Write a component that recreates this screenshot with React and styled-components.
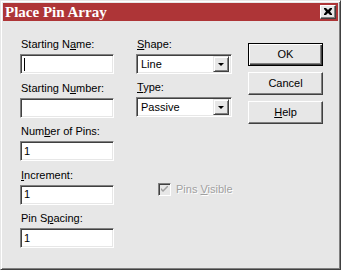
import React from "react";
import styled, { createGlobalStyle } from "styled-components";

// Classic Win9x dialog look
const GlobalStyle = createGlobalStyle`
  html, body {
    margin: 0;
    padding: 0;
    background: #e7e7e7;
  }
  body {
    font-family: "Liberation Sans", Arial, sans-serif;
    font-size: 11px;
    color: #000;
  }
`;

const Window = styled.div`
  width: 341px;
  height: 270px;
  box-sizing: border-box;
  background: #e7e7e7;
  border: 1px solid;
  border-color: #e7e7e7 #404040 #404040 #e7e7e7;
  box-shadow: inset 1px 1px #fff, inset -1px -1px #808080;
  padding: 2px;
  display: flex;
  flex-direction: column;
`;

const TitleBar = styled.div`
  height: 18px;
  background: #ae3537;
  display: flex;
  align-items: center;
  justify-content: space-between;
  padding: 0 2px;
`;

const Title = styled.span`
  font-family: "Liberation Serif", "Times New Roman", serif;
  font-weight: bold;
  font-size: 15px;
  line-height: 18px;
  color: #fff;
`;

const CloseButton = styled.div`
  width: 16px;
  height: 14px;
  box-sizing: border-box;
  background: #e7e7e7;
  border: 1px solid;
  border-color: #fff #404040 #404040 #fff;
  box-shadow: inset -1px -1px #808080;
  display: flex;
  align-items: center;
  justify-content: center;
  padding: 0 1px 1px 0;
`;

const Body = styled.div`
  display: flex;
  padding: 17px 0 0 17px;
`;

const Column = styled.div`
  width: ${(p) => p.$w}px;
  margin-right: ${(p) => p.$gap || 0}px;
  padding-top: ${(p) => p.$top || 0}px;
  display: flex;
  flex-direction: column;
  gap: ${(p) => p.$rowGap || 0}px;
`;

const Field = styled.div`
  display: flex;
  flex-direction: column;
`;

const Label = styled.label`
  line-height: 13px;
  height: 13px;
  margin: 0 0 3px 1px;
  white-space: nowrap;

  u {
    text-decoration: underline;
    text-underline-offset: 1px;
  }
`;

const Sunken = styled.div`
  height: 20px;
  box-sizing: border-box;
  background: #fff;
  border: 1px solid;
  border-color: #808080 #fff #fff #808080;
  box-shadow: inset 1px 1px #404040, inset -1px -1px #e7e7e7;
  display: flex;
  align-items: center;
  padding: 0 0 0 3px;
  line-height: 13px;
`;

const Caret = styled.span`
  display: inline-block;
  width: 1px;
  height: 13px;
  background: #000;
`;

const SelectBox = styled(Sunken)`
  justify-content: space-between;
  padding: 2px 2px 2px 4px;
`;

const DropButton = styled.div`
  width: 16px;
  height: 16px;
  box-sizing: border-box;
  background: #e7e7e7;
  border: 1px solid;
  border-color: #e7e7e7 #404040 #404040 #e7e7e7;
  box-shadow: inset 1px 1px #fff, inset -1px -1px #808080;
  display: flex;
  align-items: center;
  justify-content: center;

  &::after {
    content: "";
    border-left: 3px solid transparent;
    border-right: 3px solid transparent;
    border-top: 3px solid #000;
  }
`;

const Button = styled.div`
  width: 75px;
  height: 23px;
  box-sizing: border-box;
  background: #e7e7e7;
  border: 1px solid;
  border-color: ${(p) => (p.$default ? "#000" : "#fff #404040 #404040 #fff")};
  box-shadow: ${(p) =>
    p.$default
      ? "inset 1px 1px #fff, inset -1px -1px #404040, inset -2px -2px #808080"
      : "inset -1px -1px #808080"};
  display: flex;
  align-items: center;
  justify-content: center;
  line-height: 13px;
`;

const CheckRow = styled.div`
  display: flex;
  align-items: center;
  gap: 5px;
  margin-top: 59px;
  padding-left: 22px;
  color: #a0a0a0;
  text-shadow: 1px 1px #fff;
  line-height: 13px;
  white-space: nowrap;

  u {
    text-underline-offset: 1px;
  }
`;

const CheckBox = styled.div`
  flex: none;
  width: 13px;
  height: 13px;
  box-sizing: border-box;
  background: #e7e7e7;
  border: 1px solid;
  border-color: #808080 #fff #fff #808080;
  box-shadow: inset 1px 1px #404040, inset -1px -1px #e7e7e7;
  display: flex;
  align-items: center;
  justify-content: center;
`;

const TextField = ({ label, value, caret }) => (
  <Field>
    <Label>{label}</Label>
    <Sunken>{caret ? <Caret /> : value}</Sunken>
  </Field>
);

const SelectField = ({ label, value }) => (
  <Field>
    <Label>{label}</Label>
    <SelectBox>
      <span>{value}</span>
      <DropButton />
    </SelectBox>
  </Field>
);

const App = () => {
  return (
    <>
      <GlobalStyle />
      <Window>
        <TitleBar>
          <Title>Place Pin Array</Title>
          <CloseButton>
            <svg width="8" height="7" viewBox="0 0 8 7">
              <path
                d="M0 0h2l2 2 2-2h2v1l-2 2.5 2 2.5v1h-2l-2-2-2 2h-2v-1l2-2.5-2-2.5z"
                fill="#000"
              />
            </svg>
          </CloseButton>
        </TitleBar>
        <Body>
          <Column $w={94} $gap={22} $rowGap={7.5}>
            <TextField label={<>Starting N<u>a</u>me:</>} caret />
            <TextField label={<>Starting N<u>u</u>mber:</>} value="" />
            <TextField label={<>Num<u>b</u>er of Pins:</>} value="1" />
            <TextField label={<><u>I</u>ncrement:</>} value="1" />
            <TextField label={<>Pin S<u>p</u>acing:</>} value="1" />
          </Column>
          <Column $w={96} $gap={16} $rowGap={7}>
            <SelectField label={<><u>S</u>hape:</>} value="Line" />
            <SelectField label={<><u>T</u>ype:</>} value="Passive" />
            <CheckRow>
              <CheckBox>
                <svg width="7" height="7" viewBox="0 0 7 7">
                  <path d="M0 2l2 2 5-5v2l-5 5-2-2z" fill="#a0a0a0" />
                </svg>
              </CheckBox>
              <span>
                Pins <u>V</u>isible
              </span>
            </CheckRow>
          </Column>
          <Column $w={75} $top={5} $rowGap={6}>
            <Button $default>OK</Button>
            <Button>Cancel</Button>
            <Button>
              <span>
                <u>H</u>elp
              </span>
            </Button>
          </Column>
        </Body>
      </Window>
    </>
  );
};

export default App;
